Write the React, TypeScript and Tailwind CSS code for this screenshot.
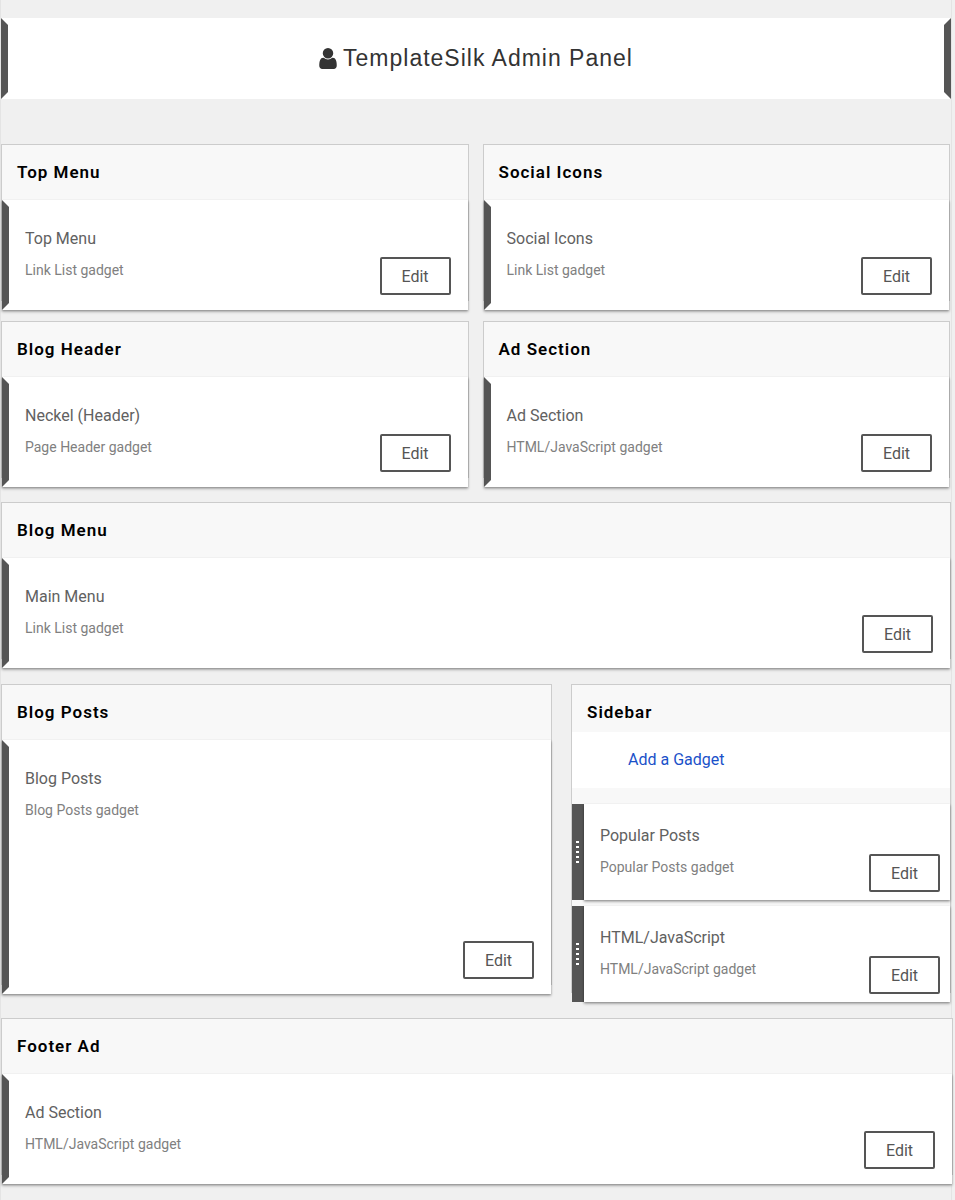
import React from 'react';

interface GadgetInfo {
    title: string;
    kind: string;
}

interface PanelProps {
    heading: string;
    gadget: GadgetInfo;
    tall?: boolean;
}

const sidebarGadgets: GadgetInfo[] = [
    { title: 'Popular Posts', kind: 'Popular Posts gadget' },
    { title: 'HTML/JavaScript', kind: 'HTML/JavaScript gadget' },
];

const UserIcon: React.FC = () => (
    <svg viewBox="256 128 1280 1536" className="h-[21px] w-[18px]" fill="currentColor" aria-hidden="true">
        <path d="M1536 1399q0 109-62.5 187t-150.5 78h-854q-88 0-150.5-78t-62.5-187q0-85 8.5-160.5t31.5-152 58.5-131 94-89 134.5-34.5q131 128 313 128t313-128q76 0 134.5 34.5t94 89 58.5 131 31.5 152 8.5 160.5zm-256-887q0 159-112.5 271.5t-271.5 112.5-271.5-112.5-112.5-271.5 112.5-271.5 271.5-112.5 271.5 112.5 112.5 271.5z" />
    </svg>
);

const EditButton: React.FC<{ label: string }> = ({ label }) => (
    <button
        type="button"
        aria-label={`Edit ${label}`}
        className="h-[38px] w-[71px] shrink-0 cursor-pointer rounded-[2px] border-2 border-[#555] bg-white pt-[2px] text-base leading-6 text-[#555]"
    >
        Edit
    </button>
);

const GadgetText: React.FC<GadgetInfo> = ({ title, kind }) => (
    <div className="flex-1 self-start">
        <p className="text-base leading-6 text-[#616161]">{title}</p>
        <p className="mt-[7px] text-sm leading-6 text-[#808080]">{kind}</p>
    </div>
);

const PanelHeading: React.FC<{ children: React.ReactNode }> = ({ children }) => (
    <h2 className="px-[15px] pt-[15px] text-[17px] leading-6 font-semibold tracking-[1px] text-black">{children}</h2>
);

const Panel: React.FC<PanelProps> = ({ heading, gadget, tall }) => (
    <section className="self-start border border-[#ccc] bg-[#f8f8f8]">
        <PanelHeading>{heading}</PanelHeading>
        {/* the gadget hangs a little below the panel frame */}
        <div
            className={`mt-4 -mb-[10px] flex bg-white shadow-[0_1px_2px_rgba(0,0,0,0.3),0_2px_3px_rgba(0,0,0,0.2)] ${tall ? 'min-h-[254px]' : 'min-h-[110px]'}`}
        >
            <div className="shrink-0 border-y-[7px] border-l-[7px] border-y-transparent border-l-[#555]" />
            <div className="flex flex-1 items-end pt-[27px] pr-[17px] pb-[15px] pl-4">
                <GadgetText {...gadget} />
                <EditButton label={gadget.title} />
            </div>
        </div>
    </section>
);

const DragHandle: React.FC = () => (
    <div className="flex w-3 shrink-0 flex-col items-start justify-center gap-[3px] bg-[#555] pl-1">
        {[0, 1, 2, 3, 4].map((dot) => (
            <span key={dot} className="h-[2px] w-[3px] bg-white" />
        ))}
    </div>
);

const Sidebar: React.FC = () => (
    <aside className="self-start border border-[#ccc] bg-[#f8f8f8]">
        <PanelHeading>Sidebar</PanelHeading>
        <div className="mt-2 bg-white py-4 pl-14">
            <a href="#" className="text-base leading-6 text-[#1a51c9]">Add a Gadget</a>
        </div>
        <div className="mt-4 -mb-[10px] flex flex-col gap-[6px]">
            {sidebarGadgets.map((gadget) => (
                <div key={gadget.title} className="flex min-h-24">
                    <DragHandle />
                    <div className="flex flex-1 items-end bg-white pt-5 pr-[10px] pb-2 pl-4 shadow-[0_1px_2px_rgba(0,0,0,0.3),0_2px_3px_rgba(0,0,0,0.2)]">
                        <GadgetText {...gadget} />
                        <EditButton label={gadget.title} />
                    </div>
                </div>
            ))}
        </div>
    </aside>
);

export default function App() {
    return (
        <div className="min-h-screen bg-[#f0f0f0] pr-[3px] font-[Roboto,sans-serif]">
            <div className="min-h-screen border-x border-[#e4e4e4] pt-[18px]">
                <header className="flex h-[81px] justify-between bg-white">
                    <div className="border-y-[7px] border-l-[7px] border-y-transparent border-l-[#555]" />
                    <h1 className="flex items-center gap-[6px] font-['Liberation_Sans',Arial,sans-serif] text-[23px] tracking-[1px] text-[#333]">
                        <UserIcon />
                        TemplateSilk Admin Panel
                    </h1>
                    <div className="border-y-[7px] border-r-[7px] border-y-transparent border-r-[#555]" />
                </header>

                <main className="mt-[45px]">
                    <div className="grid grid-cols-2 gap-x-[14px] gap-y-5 pr-px">
                        <Panel heading="Top Menu" gadget={{ title: 'Top Menu', kind: 'Link List gadget' }} />
                        <Panel heading="Social Icons" gadget={{ title: 'Social Icons', kind: 'Link List gadget' }} />
                        <Panel heading="Blog Header" gadget={{ title: 'Neckel (Header)', kind: 'Page Header gadget' }} />
                        <Panel heading="Ad Section" gadget={{ title: 'Ad Section', kind: 'HTML/JavaScript gadget' }} />
                    </div>
                    <div className="mt-6">
                        <Panel heading="Blog Menu" gadget={{ title: 'Main Menu', kind: 'Link List gadget' }} />
                    </div>
                    <div className="mt-[25px] grid grid-cols-[29fr_20fr] gap-[19px]">
                        <Panel heading="Blog Posts" gadget={{ title: 'Blog Posts', kind: 'Blog Posts gadget' }} tall />
                        <Sidebar />
                    </div>
                    <div className="mt-[25px] -mr-[2px]">
                        <Panel heading="Footer Ad" gadget={{ title: 'Ad Section', kind: 'HTML/JavaScript gadget' }} />
                    </div>
                </main>
            </div>
        </div>
    );
}
